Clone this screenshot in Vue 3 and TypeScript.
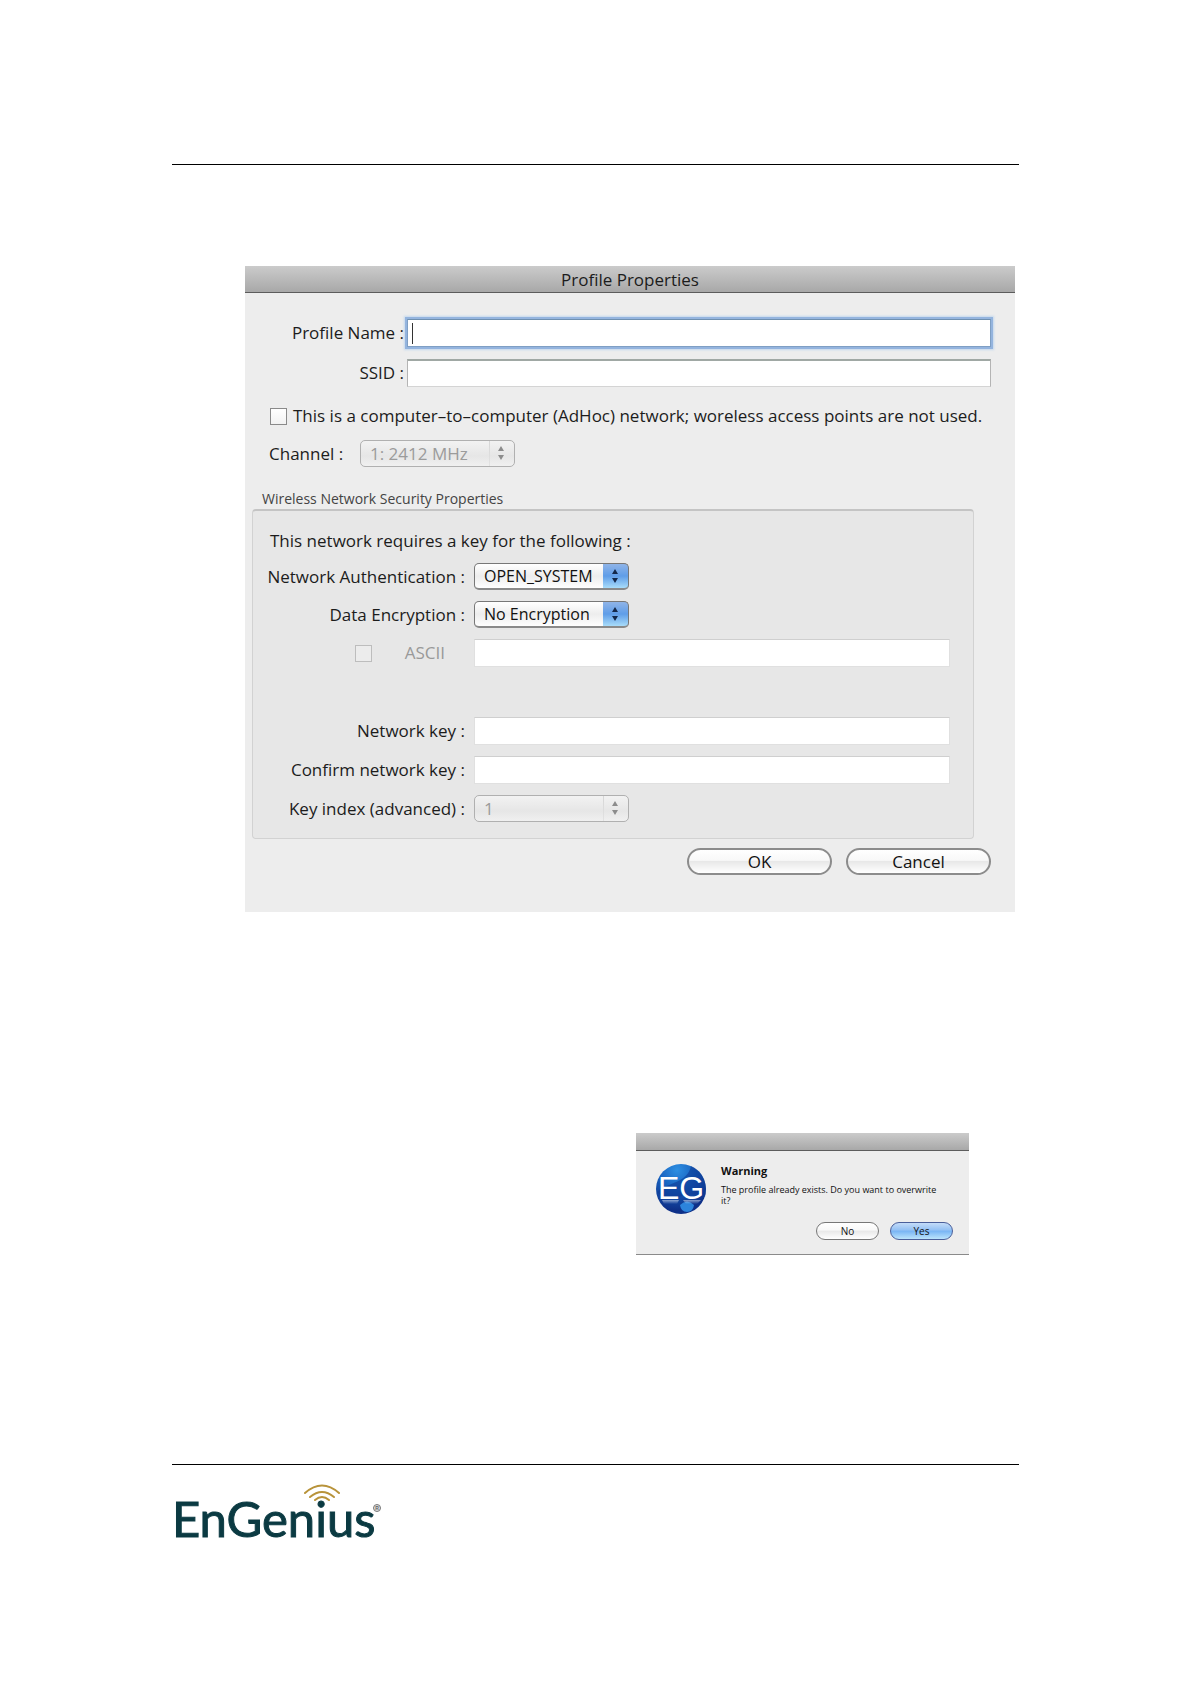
<script setup lang="ts">
import { ref } from 'vue'

const profileName = ref('')
const ssid = ref('')
const adHoc = ref(false)
const channel = ref('1: 2412 MHz')
const authentication = ref('OPEN_SYSTEM')
const encryption = ref('No Encryption')
const ascii = ref(false)
const asciiKey = ref('')
const networkKey = ref('')
const confirmKey = ref('')
const keyIndex = ref('1')

const channels: string[] = ['1: 2412 MHz']
const authentications: string[] = ['OPEN_SYSTEM']
const encryptions: string[] = ['No Encryption']
const keyIndexes: string[] = ['1', '2', '3', '4']
</script>

<template>
  <main class="page">
    <hr class="rule" />

    <form class="window profile" aria-labelledby="profile-title" @submit.prevent>
      <h1 id="profile-title" class="titlebar">Profile Properties</h1>
      <div class="body">
        <div class="identity">
          <label for="profile-name">Profile Name :</label>
          <input id="profile-name" v-model="profileName" class="field focused" type="text" />
          <label for="ssid">SSID :</label>
          <input id="ssid" v-model="ssid" class="field outlined" type="text" />
        </div>

        <div class="adhoc">
          <input id="adhoc" v-model="adHoc" class="tick" type="checkbox" />
          <label for="adhoc">This is a computer–to–computer (AdHoc) network; woreless access points are not used.</label>
        </div>

        <div class="channel">
          <label for="channel">Channel :</label>
          <span class="popup off">
            <select id="channel" v-model="channel" disabled>
              <option v-for="c in channels" :key="c">{{ c }}</option>
            </select>
            <svg class="arrows" viewBox="0 0 8 16" aria-hidden="true"><path d="M4 1 7 6H1zM4 15 7 10H1z" /></svg>
          </span>
        </div>

        <h2 class="caption">Wireless Network Security Properties</h2>
        <section class="group">
          <p class="intro">This network requires a key for the following :</p>
          <div class="security">
            <label for="auth">Network Authentication :</label>
            <span class="popup">
              <select id="auth" v-model="authentication">
                <option v-for="a in authentications" :key="a">{{ a }}</option>
              </select>
              <svg class="arrows" viewBox="0 0 8 16" aria-hidden="true"><path d="M4 1 7 6H1zM4 15 7 10H1z" /></svg>
            </span>

            <label for="enc">Data Encryption :</label>
            <span class="popup">
              <select id="enc" v-model="encryption">
                <option v-for="e in encryptions" :key="e">{{ e }}</option>
              </select>
              <svg class="arrows" viewBox="0 0 8 16" aria-hidden="true"><path d="M4 1 7 6H1zM4 15 7 10H1z" /></svg>
            </span>

            <div class="ascii">
              <input id="ascii" v-model="ascii" class="tick" type="checkbox" disabled />
              <label for="ascii">ASCII</label>
            </div>
            <input v-model="asciiKey" class="field" type="text" aria-label="ASCII key" />

            <label class="spaced" for="key">Network key :</label>
            <input id="key" v-model="networkKey" class="field spaced" type="text" />

            <label for="confirm">Confirm network key :</label>
            <input id="confirm" v-model="confirmKey" class="field" type="text" />

            <label for="index">Key index (advanced) :</label>
            <span class="popup off">
              <select id="index" v-model="keyIndex" disabled>
                <option v-for="k in keyIndexes" :key="k">{{ k }}</option>
              </select>
              <svg class="arrows" viewBox="0 0 8 16" aria-hidden="true"><path d="M4 1 7 6H1zM4 15 7 10H1z" /></svg>
            </span>
          </div>
        </section>

        <div class="actions">
          <button class="pill" type="submit">OK</button>
          <button class="pill" type="button">Cancel</button>
        </div>
      </div>
    </form>

    <section class="window warning" role="alertdialog" aria-labelledby="warning-title">
      <div class="titlebar slim"></div>
      <div class="alert">
        <svg class="badge" viewBox="0 0 52 52" aria-hidden="true">
          <defs>
            <radialGradient id="ball" cx="42%" cy="12%" r="80%">
              <stop offset="0" stop-color="#2d8fe2" />
              <stop offset="0.45" stop-color="#1762bf" />
              <stop offset="1" stop-color="#0e3088" />
            </radialGradient>
            <linearGradient id="mirror" x1="0" y1="0" x2="0" y2="1">
              <stop offset="0" stop-color="#fff" stop-opacity="0.5" />
              <stop offset="1" stop-color="#fff" stop-opacity="0" />
            </linearGradient>
          </defs>
          <circle cx="26" cy="27" r="25" fill="url(#ball)" />
          <path d="M2 30C12 20 32 22 36 4 48 9 53 22 50 35 38 26 16 44 2 30z" fill="#0d3a94" opacity="0.6" />
          <path d="M25 43Q32 36 39 43Q38 50 32 50T25 43z" fill="#2c84dc" />
          <path d="M7 38H24L22 42H9zM28 38H46L42 42H31z" fill="url(#mirror)" />
          <text x="26" y="37" text-anchor="middle" class="badge-text">EG</text>
        </svg>
        <div class="message">
          <h2 id="warning-title">Warning</h2>
          <p>The profile already exists. Do you want to overwrite it?</p>
          <div class="choices">
            <button class="pill" type="button">No</button>
            <button class="pill default" type="button">Yes</button>
          </div>
        </div>
      </div>
    </section>

    <footer class="footer">
      <hr class="rule" />
      <svg class="logo" viewBox="0 0 212 64" role="img" aria-label="EnGenius">
        <text x="0" y="53" class="wordmark">EnGenius</text>
        <g fill="none" stroke="#b8933a" stroke-width="2" stroke-linecap="round">
          <path d="M133 9Q150 -6 167 9" />
          <path d="M138 13Q150 3 162 13" />
          <path d="M143 16Q150 10 157 16" />
        </g>
        <circle cx="205" cy="24" r="3.5" fill="#ddd" stroke="#777" />
        <text x="205" y="26" text-anchor="middle" class="mark">R</text>
      </svg>
    </footer>
  </main>
</template>

<style>
body {
  margin: 0;
  background: #fff;
}
</style>

<style scoped>
.page {
  box-sizing: border-box;
  padding: 164px 171px 135px 172px;
  font: 17px/24px "Open Sans", "Noto Sans", sans-serif;
  color: #1c1c1c;
}
h1, h2, p {
  margin: 0;
  font-weight: 400;
}
.rule {
  margin: 0;
  border: 0;
  height: 1px;
  background: #000;
}
.window {
  background: #ededed;
}
.profile {
  margin: 101px 4px 0 73px;
}
.titlebar {
  box-sizing: border-box;
  height: 27px;
  font-size: 17px;
  line-height: 28px;
  text-align: center;
  background: linear-gradient(#cbcbcb, #a8a8a8);
  border-bottom: 1px solid #5c5c5c;
}
.body {
  padding: 26px 24px 37px 7px;
}
.identity {
  display: grid;
  grid-template-columns: 152px 1fr;
  column-gap: 3px;
  row-gap: 12px;
  align-items: center;
  text-align: right;
}
.field {
  box-sizing: border-box;
  width: 100%;
  height: 28px;
  padding: 0 4px;
  font: inherit;
  color: inherit;
  background: #fff;
  border: 1px solid #e0e0e0;
  border-top-color: #cfcfcf;
  border-radius: 0;
  outline: none;
}
.outlined {
  border-color: #b4b4b4;
  border-top: 2px solid #a0a8a4;
  border-bottom-color: #d4d4d4;
}
.focused {
  border: 1px solid #7f9fc4;
  border-top-color: #6f90b0;
  box-shadow: 0 0 0 2px #94b4de, 0 0 2px 3px #c4d8ee;
  background: linear-gradient(#333, #333) 4px center / 1px 21px no-repeat #fff;
}
.adhoc {
  display: flex;
  align-items: center;
  gap: 6px;
  margin: 17px 0 0 18px;
  white-space: nowrap;
}
.tick {
  box-sizing: border-box;
  appearance: none;
  flex: none;
  width: 17px;
  height: 17px;
  margin: 0;
  border: 1px solid #8a8a8a;
  background: linear-gradient(#fff, #f2f2f2);
}
.tick:disabled {
  border-color: #bdbdbd;
  background: #ececec;
}
.channel {
  display: flex;
  align-items: center;
  margin: 12px 0 0 17px;
}
.channel label {
  width: 91px;
}
.popup {
  position: relative;
  display: block;
  width: 155px;
  height: 27px;
}
.popup select {
  box-sizing: border-box;
  appearance: none;
  display: block;
  width: 100%;
  height: 27px;
  padding: 0 28px 0 9px;
  font: inherit;
  font-size: 16px;
  line-height: 24px;
  color: #111;
  border: 1px solid #777;
  border-bottom: 2px solid #8a8a8a;
  border-radius: 5px;
  background:
    linear-gradient(#8fb4e8, #5f9de8 50%, #a8dcfa) right top / 25px 100% no-repeat,
    linear-gradient(#fff, #ededed 50%, #fff);
}
.popup.off select {
  font-size: 17px;
  color: #9b9b9b;
  opacity: 1;
  border: 1px solid #b0b0b0;
  background:
    linear-gradient(#d6d6d6, #e2e2e2) right 24px top / 1px 100% no-repeat,
    linear-gradient(#f2f2f2, #e6e6e6 60%, #f0f0f0);
}
.arrows {
  position: absolute;
  top: 5px;
  right: 10px;
  width: 8px;
  height: 16px;
  fill: #14284a;
  pointer-events: none;
}
.off .arrows {
  fill: #8c8c8c;
}
.caption {
  margin: 22px 0 0 10px;
  font-size: 14px;
  line-height: 20px;
  color: #444;
}
.group {
  margin-right: 17px;
  padding: 18px 23px 16px 0;
  background: #e7e7e7;
  border: 1px solid #d2d2d2;
  border-top: 2px solid #c4c4c4;
  border-radius: 4px;
}
.intro {
  padding-left: 17px;
}
.security {
  display: grid;
  grid-template-columns: 212px 1fr;
  column-gap: 9px;
  row-gap: 11px;
  align-items: center;
  margin-top: 10px;
  text-align: right;
}
.spaced {
  margin-top: 39px;
}
.ascii {
  display: flex;
  align-items: center;
  justify-content: flex-end;
  gap: 33px;
  padding-right: 20px;
  color: #999;
}
.actions {
  display: flex;
  justify-content: flex-end;
  gap: 14px;
  margin-top: 9px;
}
.pill {
  box-sizing: border-box;
  width: 145px;
  height: 27px;
  padding: 0;
  font: inherit;
  line-height: 22px;
  color: #111;
  border: 2px solid #8c8c8c;
  border-radius: 14px;
  background: linear-gradient(#fff, #f8f8f8 45%, #e8e8e8 50%, #fff);
}
.warning {
  width: 333px;
  margin: 221px 50px 0 auto;
  border-bottom: 1px solid #8a8a8a;
  box-sizing: border-box;
}
.slim {
  height: 18px;
}
.alert {
  display: flex;
  gap: 14px;
  padding: 11px 16px 14px 19px;
}
.badge {
  flex: none;
  width: 52px;
  height: 52px;
}
.badge-text {
  font: 32px "Liberation Sans", Arial, sans-serif;
  fill: #fff;
}
.message {
  flex: 1;
  color: #111;
  font-size: 9px;
  line-height: 11px;
}
.message h2 {
  font-size: 11px;
  font-weight: 700;
  line-height: 18px;
}
.message p {
  margin-top: 4px;
  padding-right: 12px;
}
.choices {
  display: flex;
  justify-content: flex-end;
  gap: 11px;
  margin-top: 16px;
}
.choices .pill {
  width: 63px;
  height: 18px;
  font-size: 10px;
  line-height: 14px;
  border-width: 1px;
  border-color: #777;
}
.choices .default {
  border-color: #4a5f9a;
  background: linear-gradient(#c4dcf8, #92c0f4 45%, #78b4f4 50%, #bce4fc);
}
.footer {
  margin-top: 209px;
}
.logo {
  display: block;
  width: 212px;
  height: 64px;
  margin-top: 19px;
}
.wordmark {
  font: 400 49px Lato, sans-serif;
  fill: #0b3a42;
  stroke: #0b3a42;
  stroke-width: 1px;
}
.mark {
  font: 700 5px "Liberation Sans", sans-serif;
  fill: #666;
}
</style>
